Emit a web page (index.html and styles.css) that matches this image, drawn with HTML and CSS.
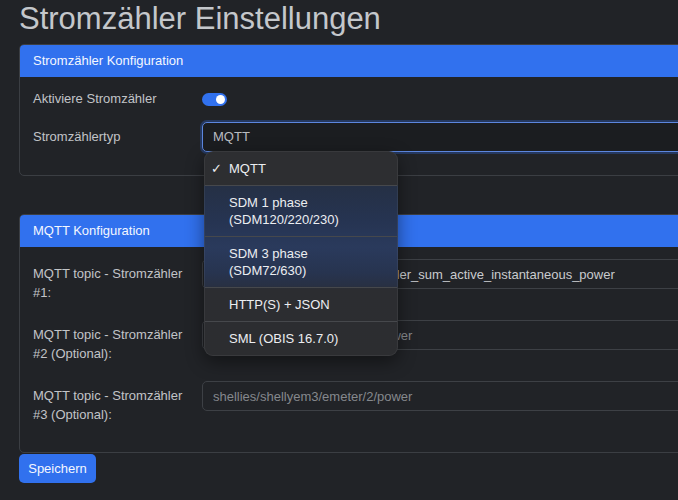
FILE: index.html
```html
<!doctype html>
<html lang="de">

<head>
  <meta charset="utf-8">
  <title>Stromzähler Einstellungen</title>
  <link rel="stylesheet" href="styles.css">
</head>

<body>
  <section class="page">
    <h1 class="title">Stromzähler Einstellungen</h1>

    <div class="card">
      <div class="card-head">Stromzähler Konfiguration</div>
      <div class="card-body">
        <div class="row">
          <label class="lbl">Aktiviere Stromzähler</label>
          <span class="switch"><span class="knob"></span></span>
        </div>
        <div class="row">
          <label class="lbl">Stromzählertyp</label>
          <div class="field">
            <div class="select">MQTT</div>
            <ul class="menu">
              <li class="item checked">MQTT</li>
              <li class="item">SDM 1 phase<br>(SDM120/220/230)</li>
              <li class="item">SDM 3 phase<br>(SDM72/630)</li>
              <li class="item">HTTP(S) + JSON</li>
              <li class="item">SML (OBIS 16.7.0)</li>
            </ul>
          </div>
        </div>
      </div>
    </div>

    <div class="card second">
      <div class="card-head">MQTT Konfiguration</div>
      <div class="card-body">
        <div class="row topic">
          <label class="lbl">MQTT topic - Stromzähler #1:</label>
          <div class="field">
            <input class="input" type="text" value="homeassistant/sensor/stromzähler_sum_active_instantaneous_power">
          </div>
        </div>
        <div class="row topic">
          <label class="lbl">MQTT topic - Stromzähler #2 (Optional):</label>
          <div class="field">
            <input class="input" type="text" placeholder="shellies/shellyem3/emeter/1/power">
          </div>
        </div>
        <div class="row topic">
          <label class="lbl">MQTT topic - Stromzähler #3 (Optional):</label>
          <div class="field">
            <input class="input" type="text" placeholder="shellies/shellyem3/emeter/2/power">
          </div>
        </div>
      </div>
    </div>

    <button class="btn">Speichern</button>
  </section>
</body>

</html>
```

FILE: styles.css
```css
* {
  font-family: "Liberation Sans", Arial, Helvetica, sans-serif;
  box-sizing: border-box;
}

html,
body {
  margin: 0;
  background-color: #212327;
  overflow: hidden;
}

.page {
  width: 780px;
  padding: 0 0 0 19px;
}

.title {
  margin: 0 0 7px 0;
  font-size: 31px;
  line-height: 37px;
  font-weight: normal;
  color: #c4c7cb;
}

.card {
  border: 1px solid #3b3e43;
  border-radius: 5px;
  overflow: visible;
}

.card.second {
  margin-top: 38px;
}

.card-head {
  background-color: #3171ee;
  color: #f4f7ff;
  font-size: 13px;
  line-height: 16px;
  padding: 8px 13px;
  border-radius: 4px 4px 0 0;
}

.card-body {
  padding: 12px 13px 10px 13px;
}

.row {
  display: flex;
  align-items: center;
  margin-bottom: 13px;
}

.lbl {
  width: 169px;
  flex-shrink: 0;
  padding-right: 14px;
  font-size: 13px;
  line-height: 20px;
  color: #c2c4c8;
}

.row.topic {
  align-items: flex-start;
  min-height: 48px;
}

.row.topic .lbl {
  padding-top: 5px;
  line-height: 19px;
}

.field {
  flex: 1;
  position: relative;
}

.switch {
  display: inline-block;
  width: 25px;
  height: 13px;
  border-radius: 7px;
  background-color: #3171ee;
  position: relative;
}

.knob {
  position: absolute;
  right: 2px;
  top: 2px;
  width: 9px;
  height: 9px;
  border-radius: 50%;
  background-color: #ffffff;
}

.select {
  height: 30px;
  line-height: 28px;
  padding: 0 10px;
  font-size: 13px;
  color: #b9bcc0;
  background-color: #1b1d20;
  border: 1px solid #5c86de;
  border-radius: 5px;
  box-shadow: 0 0 0 2px rgba(49, 113, 238, 0.28);
}

.input {
  display: block;
  width: 100%;
  height: 30px;
  padding: 0 10px;
  font-size: 13px;
  color: #c9cbce;
  background-color: #212327;
  border: 1px solid #3d4045;
  border-radius: 5px;
  outline: none;
}

.input::placeholder {
  color: #85888d;
}

.menu {
  position: absolute;
  z-index: 10;
  left: 2px;
  top: 29px;
  width: 194px;
  margin: 0;
  padding: 0;
  list-style: none;
  border-radius: 9px;
  overflow: hidden;
  border: 1px solid rgba(255, 255, 255, 0.06);
  background: linear-gradient(180deg, #2d2e31 0, #2d2e31 33px, #253045 34px, #263452 70px, #2a3a5c 95px, #273450 120px, #283043 134px, #2c2d31 137px, #2c2d30 100%);
  box-shadow: 0 6px 18px rgba(0, 0, 0, 0.45);
}

.item {
  position: relative;
  padding: 8px 8px 8px 24px;
  font-size: 13px;
  line-height: 17px;
  color: #eceef1;
  border-top: 1px solid #46484c;
}

.item:first-child {
  border-top: none;
}

.item.checked::before {
  content: "\2713";
  position: absolute;
  left: 6px;
  top: 8px;
}

.btn {
  margin-top: 1px;
  width: 77px;
  height: 29px;
  border: none;
  border-radius: 5px;
  background-color: #3171ee;
  color: #f4f7ff;
  font-size: 13px;
  padding: 0;
}
```
